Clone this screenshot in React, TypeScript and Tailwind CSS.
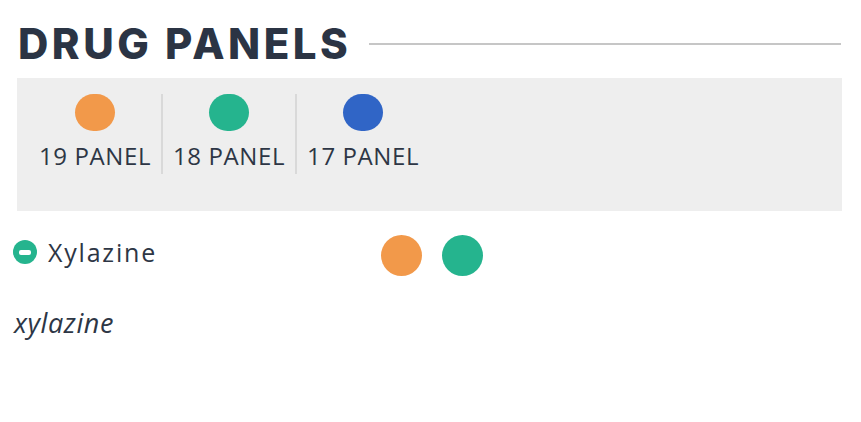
import React from "react";

const panels = [
  { label: "19 PANEL", color: "bg-[#f2994a]" },
  { label: "18 PANEL", color: "bg-[#25b48e]" },
  { label: "17 PANEL", color: "bg-[#3065c6]" },
];

export default function App() {
  return (
    <div className="w-[861px] h-[422px] bg-white text-[#2d3645] overflow-hidden" style={{ fontFamily: '"Open Sans", "Liberation Sans", sans-serif' }}>
      <div className="flex items-center pl-[18px] pr-[20px] pt-[18px] h-[70px]">
        <h1
          className="text-[42px] leading-none font-extrabold tracking-[3.5px] text-[#2b3444] whitespace-nowrap"
          style={{ fontFamily: 'Inter, "Liberation Sans", sans-serif' }}
        >
          DRUG PANELS
        </h1>
        <div className="flex-1 h-[2px] bg-[#c6c6c6] ml-[18px]" />
      </div>
      <div className="ml-[17px] mr-[19px] mt-[8px] h-[133px] bg-[#eeeeee] pl-[12px] pt-[16px]">
        <div className="flex">
          {panels.map((p, i) => (
            <div key={p.label} className="flex">
              {i > 0 && <div className="w-[2px] h-[80px] bg-[#d9d9d9]" />}
              <div className="flex flex-col items-center px-[10px] h-[80px]">
                <div className={`w-[40px] h-[40px] rounded-full ${p.color}`} />
                <div className="text-[24px] tracking-[0.6px] leading-[36px] mt-[7px] whitespace-nowrap">{p.label}</div>
              </div>
            </div>
          ))}
        </div>
      </div>
      <div className="flex items-center h-[88px] pl-[13px]">
        <div className="w-[24px] h-[24px] rounded-full bg-[#25b48e] flex items-center justify-center mt-[-6px]">
          <div className="w-[12px] h-[5px] rounded-[2px] bg-white" />
        </div>
        <div className="ml-[11px] w-[333px] text-[25px] tracking-[1.8px] leading-none mt-[-6px]">Xylazine</div>
        <div className="flex gap-[20px]">
          <div className="w-[41px] h-[41px] rounded-full bg-[#f2994a]" />
          <div className="w-[41px] h-[41px] rounded-full bg-[#25b48e]" />
        </div>
      </div>
      <div className="pl-[14px] text-[27px] italic tracking-[0.6px] leading-none mt-[10px]">xylazine</div>
    </div>
  );
}
